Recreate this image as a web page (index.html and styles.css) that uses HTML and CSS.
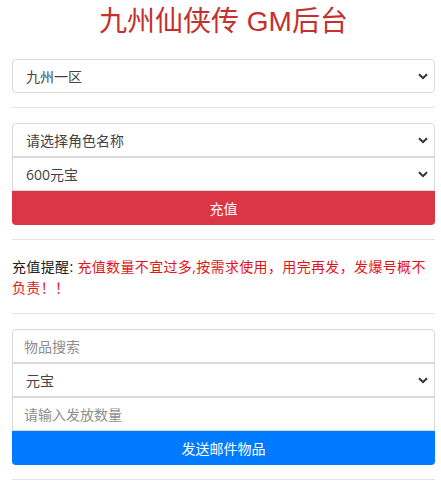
FILE: index.html
```html
<!DOCTYPE html>
<html lang="zh-CN">
<head>
<meta charset="utf-8">
<title>九州仙侠传 GM后台</title>
<link rel="stylesheet" href="styles.css">
</head>
<body>
<div class="page">
  <h1 class="title">九州仙侠传 GM后台</h1>

  <div class="field single">
    <select class="ctrl">
      <option>九州一区</option>
    </select>
    <svg class="chev" viewBox="0 0 10 7" width="10" height="7"><path d="M1 1.2 L5 5.2 L9 1.2" fill="none" stroke="#333" stroke-width="2"/></svg>
  </div>

  <hr class="rule">

  <div class="group">
    <div class="field">
      <select class="ctrl">
        <option>请选择角色名称</option>
      </select>
      <svg class="chev" viewBox="0 0 10 7" width="10" height="7"><path d="M1 1.2 L5 5.2 L9 1.2" fill="none" stroke="#333" stroke-width="2"/></svg>
    </div>
    <div class="field">
      <select class="ctrl">
        <option>600元宝</option>
      </select>
      <svg class="chev" viewBox="0 0 10 7" width="10" height="7"><path d="M1 1.2 L5 5.2 L9 1.2" fill="none" stroke="#333" stroke-width="2"/></svg>
    </div>
    <button class="btn btn-red">充值</button>
  </div>

  <hr class="rule">

  <p class="notice"><span class="label">充值提醒: </span><span class="warn">充值数量不宜过多,按需求使用，用完再发，发爆号概不负责！！</span></p>

  <hr class="rule">

  <div class="group">
    <div class="field">
      <input class="ctrl input" placeholder="物品搜索">
    </div>
    <div class="field">
      <select class="ctrl">
        <option>元宝</option>
      </select>
      <svg class="chev" viewBox="0 0 10 7" width="10" height="7"><path d="M1 1.2 L5 5.2 L9 1.2" fill="none" stroke="#333" stroke-width="2"/></svg>
    </div>
    <div class="field">
      <input class="ctrl input" placeholder="请输入发放数量">
    </div>
    <button class="btn btn-blue">发送邮件物品</button>
  </div>

  <hr class="rule">
</div>
</body>
</html>
```

FILE: styles.css
```css
html, body {
  margin: 0;
  padding: 0;
  background: #fff;
}

body {
  font-family: "Open Sans", "Noto Sans CJK SC", sans-serif;
  font-size: 14px;
  color: #333;
}

.page {
  padding: 0 6px 0 12px;
}

.title {
  margin: 5px 0 20px;
  font-size: 28px;
  line-height: 34px;
  font-weight: normal;
  text-align: center;
  color: #c5302e;
  font-family: "Liberation Sans", "Noto Sans CJK SC", sans-serif;
}

.field {
  position: relative;
  height: 34px;
}

.ctrl {
  display: block;
  box-sizing: border-box;
  width: 100%;
  height: 34px;
  margin: 0;
  border: 1px solid #d9d9d9;
  border-radius: 0;
  background: #fff;
  font-family: "Open Sans", "Noto Sans CJK SC", sans-serif;
  font-size: 14px;
  color: #444;
  padding: 0 30px 0 13px;
  appearance: none;
  -webkit-appearance: none;
  outline: none;
}

.input {
  padding-left: 11px;
}

.input::placeholder {
  color: #8e8e8e;
}

.single .ctrl {
  border-radius: 4px;
}

.chev {
  position: absolute;
  right: 7px;
  top: 14px;
  pointer-events: none;
}

.group > .field:first-child .ctrl {
  border-radius: 4px 4px 0 0;
}

.btn {
  display: block;
  width: 100%;
  height: 34px;
  border: none;
  border-radius: 0 0 4px 4px;
  color: #fff;
  font-family: "Open Sans", "Noto Sans CJK SC", sans-serif;
  font-size: 14px;
  padding: 0;
  margin: 0;
}

.btn-red {
  background: #dc3545;
}

.btn-blue {
  background: #007bff;
}

.rule {
  border: 0;
  border-top: 1px solid #e5e5e5;
  margin: 14px 0 15px;
  height: 0;
}

.notice {
  margin: 0;
  line-height: 21px;
  padding: 1px 0;
  letter-spacing: 0.35px;
}

.label {
  color: #222;
}

.warn {
  color: #e4141b;
}
```
